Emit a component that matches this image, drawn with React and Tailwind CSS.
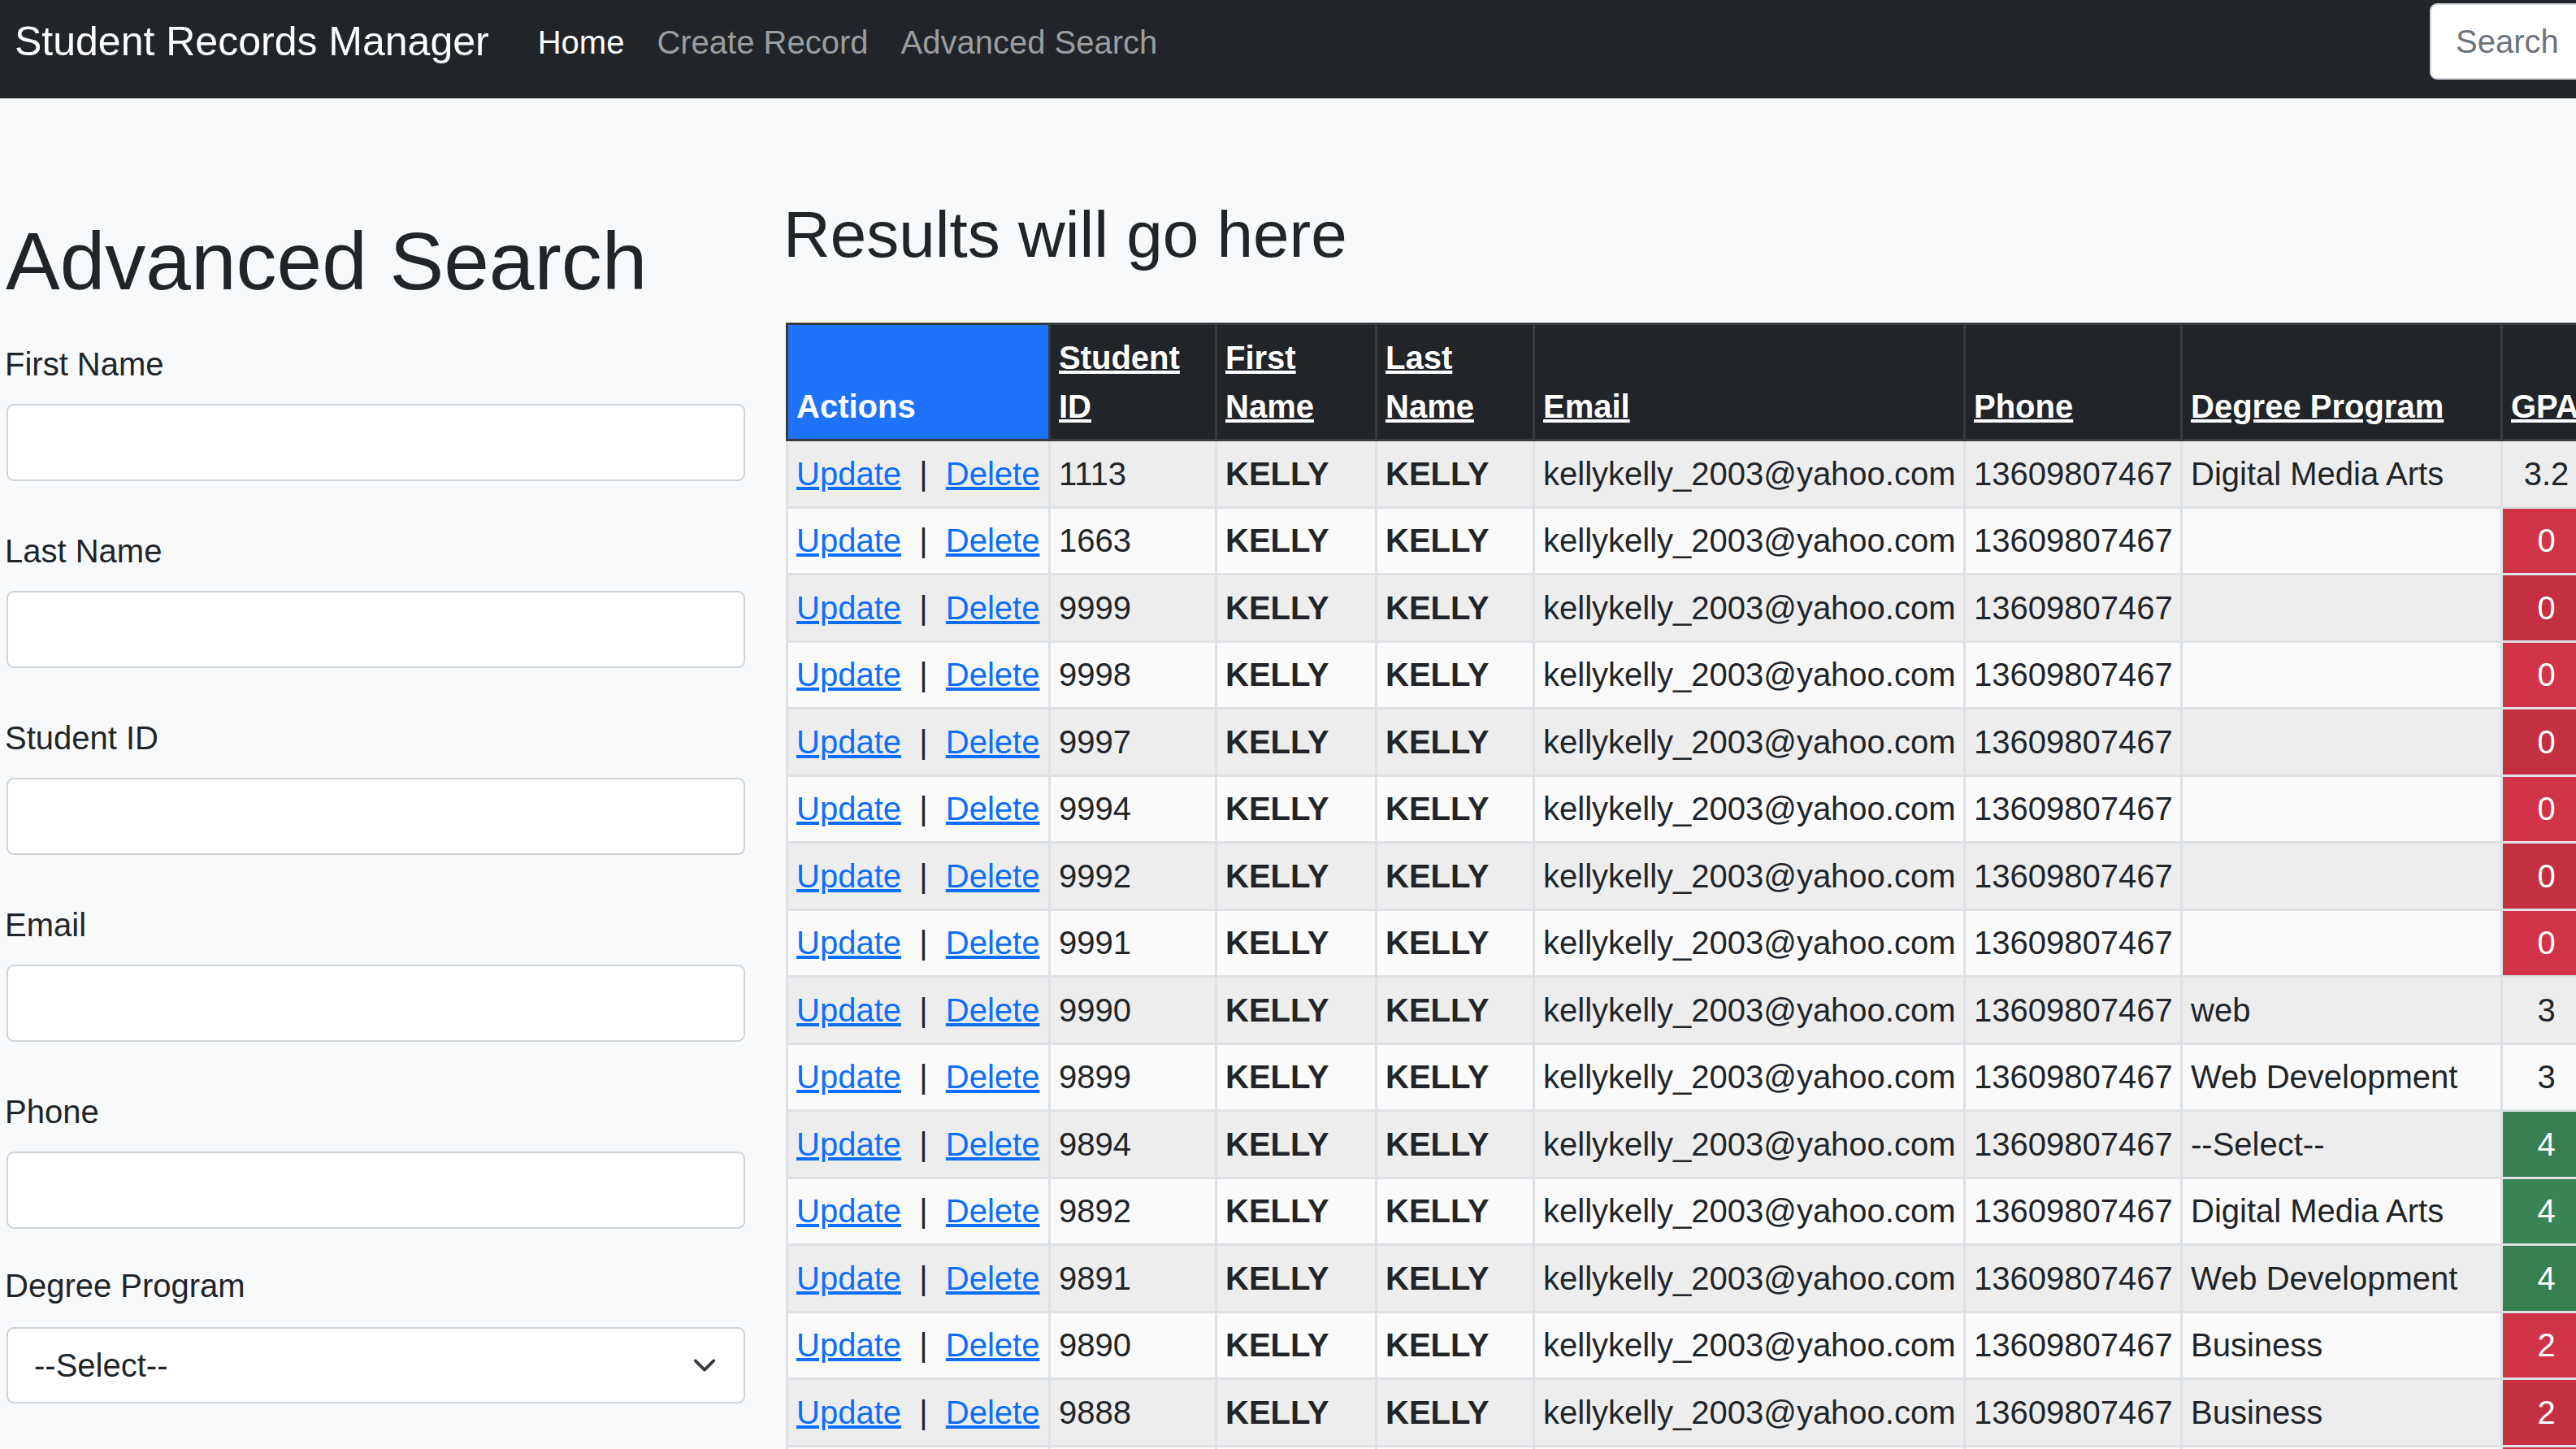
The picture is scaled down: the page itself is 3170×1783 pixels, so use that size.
import React from "react";

const rows = [
  { id: "1113", degree: "Digital Media Arts", gpa: "3.2", tone: null },
  { id: "1663", degree: "", gpa: "0", tone: "red" },
  { id: "9999", degree: "", gpa: "0", tone: "red" },
  { id: "9998", degree: "", gpa: "0", tone: "red" },
  { id: "9997", degree: "", gpa: "0", tone: "red" },
  { id: "9994", degree: "", gpa: "0", tone: "red" },
  { id: "9992", degree: "", gpa: "0", tone: "red" },
  { id: "9991", degree: "", gpa: "0", tone: "red" },
  { id: "9990", degree: "web", gpa: "3", tone: null },
  { id: "9899", degree: "Web Development", gpa: "3", tone: null },
  { id: "9894", degree: "--Select--", gpa: "4", tone: "green" },
  { id: "9892", degree: "Digital Media Arts", gpa: "4", tone: "green" },
  { id: "9891", degree: "Web Development", gpa: "4", tone: "green" },
  { id: "9890", degree: "Business", gpa: "2", tone: "red" },
  { id: "9888", degree: "Business", gpa: "2", tone: "red" },
];

function gpaClass(tone, striped) {
  if (tone === "red") return striped ? "bg-[#c53041] text-white" : "bg-[#d13446] text-white";
  if (tone === "green") return striped ? "bg-[#377e53] text-white" : "bg-[#3a8458] text-white";
  return "";
}

const td = "px-[10px] py-[9.75px] leading-[60px] border-[3px] border-[#dee2e6] whitespace-nowrap align-top";
const th = "px-[10px] py-[10px] leading-[60px] border-[3px] border-[#373b3e] align-bottom text-left font-bold";

function Field({ label, last }) {
  return (
    <div className={last ? "mb-[40px]" : "mb-[56px]"}>
      <label className="block -ml-[2px] text-[40px] leading-[60px] text-[#212529] mb-[19px]">{label}</label>
      <input
        type="text"
        className="block w-full h-[95px] bg-white border-2 border-[#ced4da] rounded-[9px] px-[30px] text-[40px] outline-none"
      />
    </div>
  );
}

export default function App() {
  return (
    <div className="w-[3170px] h-[1783px] overflow-hidden bg-[#f8f9fa] font-['Liberation_Sans',Arial,sans-serif] text-[#212529]">
      <nav className="h-[121px] bg-[#212529] flex items-start">
        <a className="shrink-0 ml-[18px] mt-[14px] text-[50px] leading-[75px] text-white whitespace-nowrap">
          Student Records Manager
        </a>
        <ul className="shrink-0 ml-[40px] mt-[22px] flex text-[40px] leading-[60px] whitespace-nowrap">
          <li className="px-[20px] text-white">Home</li>
          <li className="px-[20px] text-[#9b9d9f]">Create Record</li>
          <li className="px-[20px] text-[#9b9d9f]">Advanced Search</li>
        </ul>
        <input
          type="search"
          placeholder="Search"
          className="shrink-0 ml-auto -mr-[220px] mt-[4px] w-[400px] h-[94px] bg-white border-2 border-[#ced4da] rounded-[9px] px-[30px] text-[40px] placeholder:text-[#6c757d] outline-none"
        />
      </nav>

      <div className="flex items-start">
        <div className="shrink-0 ml-[8px] w-[909px] pt-[140px]">
          <h1 className="text-[100px] leading-[120px] font-normal mb-[37px] -ml-[1px]">Advanced Search</h1>
          <Field label="First Name" />
          <Field label="Last Name" />
          <Field label="Student ID" />
          <Field label="Email" />
          <Field label="Phone" last />
          <div>
            <label className="block -ml-[2px] text-[40px] leading-[60px] mb-[21px]">Degree Program</label>
            <div className="relative">
              <select className="block w-full h-[94px] appearance-none bg-white border-2 border-[#ced4da] rounded-[9px] pl-[32px] pr-[90px] text-[40px] text-[#212529] outline-none">
                <option>--Select--</option>
              </select>
              <svg
                className="absolute right-[35px] top-1/2 -translate-y-1/2 pointer-events-none"
                width="30"
                height="30"
                viewBox="0 0 16 16"
              >
                <path d="m2 5 6 6 6-6" fill="none" stroke="#343a40" strokeWidth="2" strokeLinecap="round" strokeLinejoin="round" />
              </svg>
            </div>
          </div>
        </div>

        <div className="shrink-0 ml-[50px] pt-[120px]">
          <h2 className="text-[80px] leading-[96px] font-normal mb-[60px] -ml-[3px]">Results will go here</h2>
          <table className="table-fixed border-collapse w-[2220px] text-[40px]">
            <thead>
              <tr className="bg-[#212529] text-white">
                <th className={`${th} w-[323px] bg-[#1e73fa]`}>Actions</th>
                <th className={`${th} w-[205px]`}><a className="underline">Student ID</a></th>
                <th className={`${th} w-[197px]`}><a className="underline">First Name</a></th>
                <th className={`${th} w-[194px]`}><a className="underline">Last Name</a></th>
                <th className={`${th} w-[530px]`}><a className="underline">Email</a></th>
                <th className={`${th} w-[267px]`}><a className="underline">Phone</a></th>
                <th className={`${th} w-[394px]`}><a className="underline">Degree Program</a></th>
                <th className={`${th} w-[110px] whitespace-nowrap`}><a className="underline">GPA</a></th>
              </tr>
            </thead>
            <tbody>
              {rows.map((r, i) => {
                const striped = i % 2 === 0;
                return (
                  <tr key={r.id} className={striped ? "bg-[#ededed]" : "bg-[#fafafa]"}>
                    <td className={td}>
                      <a className="text-[#0d6efd] underline">Update</a>
                      {"\u00a0\u00a0|\u00a0\u00a0"}
                      <a className="text-[#0d6efd] underline">Delete</a>
                    </td>
                    <td className={td}>{r.id}</td>
                    <td className={`${td} font-bold`}>KELLY</td>
                    <td className={`${td} font-bold`}>KELLY</td>
                    <td className={td}>kellykelly_2003@yahoo.com</td>
                    <td className={td}>13609807467</td>
                    <td className={td}>{r.degree}</td>
                    <td className={`${td} text-center ${gpaClass(r.tone, striped)}`}>{r.gpa}</td>
                  </tr>
                );
              })}
              <tr className="bg-[#fafafa] h-[82px]">
                <td className={td}></td>
                <td className={td}></td>
                <td className={td}></td>
                <td className={td}></td>
                <td className={td}></td>
                <td className={td}></td>
                <td className={td}></td>
                <td className={`${td} bg-[#d13446]`}></td>
              </tr>
            </tbody>
          </table>
        </div>
      </div>
    </div>
  );
}
